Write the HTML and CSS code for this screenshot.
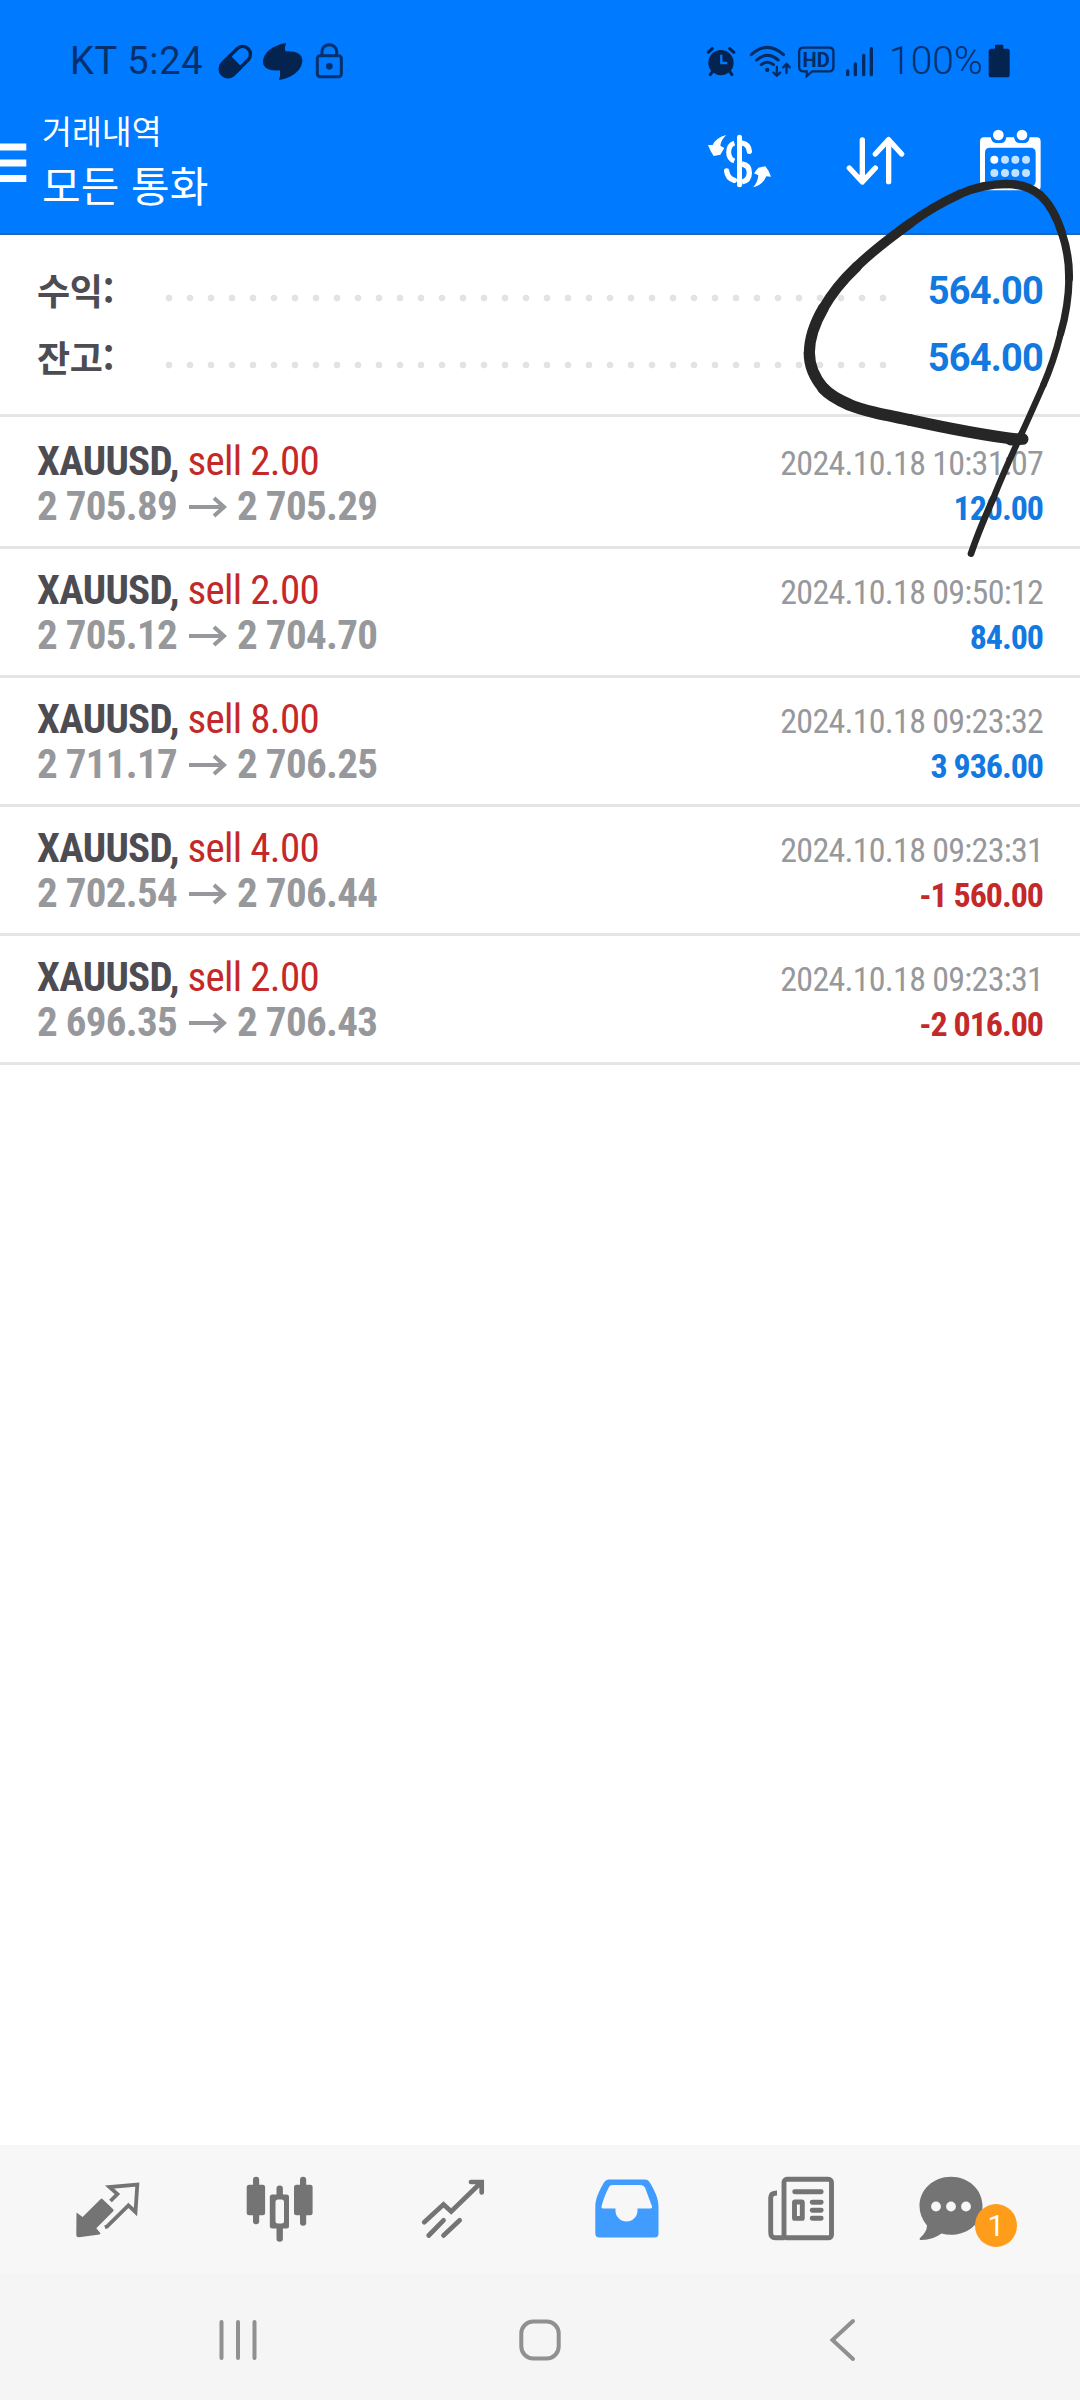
FILE: index.html
```html
<!DOCTYPE html>
<html lang="ko">
<head>
<meta charset="utf-8">
<title>거래내역</title>
<link rel="stylesheet" href="styles.css">
</head>
<body>
<div class="screen">
  <header class="top">
    <div class="status">
      <div class="status-left">
        <span class="clock">KT 5:24</span>
        <svg class="left-icons" viewBox="645 60 390 129">
          <g transform="rotate(-45 706 124)">
            <rect x="651" y="101" width="110" height="47" rx="23.500" fill="none" stroke="#04234f" stroke-width="10" transform="translate(5 0) scale(.992 1)"/>
            <path d="M708 96H676a28 28 0 0 0 0 57H708z" fill="#04234f"/>
          </g>
          <path d="M858 69C818 76 789 98 789 126C789 144 808 154 840 151Q842 168 837 180C878 174 907 150 907 121C907 100 885 92 856 94Q853 84 858 69Z" fill="#04234f"/>
          <rect x="952" y="107" width="72" height="63" rx="8" fill="none" stroke="#06306b" stroke-width="9"/>
          <path d="M966 107V94a22 20 0 0 1 44 0V107" fill="none" stroke="#06306b" stroke-width="9"/>
          <circle cx="988" cy="139" r="10" fill="#06306b"/>
        </svg>
      </div>
      <div class="status-right">
        <svg class="right-icons" viewBox="70 60 520 120">
          <g fill="#04234f" stroke="#04234f" stroke-linecap="round">
            <circle cx="121" cy="125" r="38" stroke="none"/>
            <path d="M83 94L95 83M147 83L160 94" stroke-width="9"/>
            <path d="M97 150L89 161M146 150L154 161" stroke-width="9"/>
            <path d="M122 104V126H137" fill="none" stroke="#007aff" stroke-width="7"/>
          </g>
          <g fill="none" stroke="#052c62" stroke-width="9" stroke-linecap="round">
            <path d="M212 101Q260 57 309 101M228 117Q260 89 293 117M242 131Q260 117 279 131"/>
            <path d="M289 138V162M279 155L289 164L299 155M318 156V131M308 139L318 129L328 139" stroke-width="7"/>
          </g>
          <circle cx="260" cy="147" r="6.500" fill="#052c62"/>
          <path d="M369 80H446Q459 80 459 93V138Q459 151 446 151H395L379 165V151H369Q356 151 356 138V93Q356 80 369 80Z" fill="none" stroke="#052c62" stroke-width="7"/>
          <text x="407" y="137" class="hd" text-anchor="middle" textLength="82" lengthAdjust="spacingAndGlyphs">HD</text>
          <path d="M502 150V161M525 129V161M550 103V161M573 83V161" fill="none" stroke="#052c62" stroke-width="10" stroke-linecap="round"/>
        </svg>
        <span class="battery-text">100%</span>
        <svg class="battery" viewBox="922 70 66 102"><path d="M943 74Q943 72 946 72H965Q968 72 968 74V84H980Q987 84 987 92V162Q987 170 980 170H931Q924 170 924 162V92Q924 84 931 84H943Z" fill="#04234f"/></svg>
      </div>
    </div>
    <div class="toolbar">
      <svg class="menu" viewBox="0 0 27 40"><path d="M0 4H26.300M0 20H26.300M0 35.500H26.300" stroke="#fff" stroke-width="7"/></svg>
      <div class="titles">
        <div class="title-small">거래내역</div>
        <div class="title-big">모든 통화</div>
      </div>
      <div class="actions">
        <svg class="action a-dollar" viewBox="78 325 204 198">
          <g fill="none" stroke="#fff">
            <path d="M178.500 353V495" stroke-width="15" stroke-linecap="round"/>
            <path d="M163 370Q146 376 146 398Q146 418 163 424" stroke-width="15"/>
            <path d="M186 370Q207 374 208 395" stroke-width="16" stroke-linecap="round"/>
            <path d="M186 433Q208 436 208 459Q208 482 186 487" stroke-width="16"/>
            <path d="M140 454Q142 476 163 482" stroke-width="16" stroke-linecap="round"/>
          </g>
          <path d="M139 346Q124 359 121 378L133 385L121 405L101 409Q91 395 84 376L98 376Q108 354 139 346Z" fill="#fff"/>
          <path d="M219 503Q233 489 235 467L222 461L235 444L256 440Q268 454 273 471L259 470Q249 495 219 503Z" fill="#fff"/>
        </svg>
        <svg class="action a-sort" viewBox="498 325 178 198"><path d="M547 361V486M508 445L547 487L586 445M626 486V361M586 403L626 360L665 403" fill="none" stroke="#fff" stroke-width="16" stroke-linecap="round" stroke-linejoin="round"/></svg>
        <svg class="action a-cal" viewBox="900 325 183 198">
          <path fill-rule="evenodd" fill="#fff" d="M912 353H932Q936 370 947 370H965Q976 370 979 353H1002Q1005 370 1017 370H1035Q1046 370 1049 353H1070Q1082 353 1082 366V500Q1082 512 1070 512H912Q900 512 900 500V366Q900 353 912 353ZM930 384Q915 384 915 399V484Q915 500 930 500H1051Q1067 500 1067 484V399Q1067 384 1051 384Z"/>
          <circle cx="955" cy="346" r="16" fill="#fff"/><circle cx="1026" cy="346" r="16" fill="#fff"/>
          <circle cx="943" cy="420" r="12" fill="#fff"/>
          <g fill="#c2e2ff"><circle cx="975" cy="420" r="12"/><circle cx="1006" cy="420" r="12"/><circle cx="1038" cy="420" r="12"/><circle cx="943" cy="460" r="12"/><circle cx="975" cy="460" r="12"/><circle cx="1006" cy="460" r="12"/><circle cx="1038" cy="460" r="12"/></g>
        </svg>
      </div>
    </div>
  </header>

  <section class="summary">
    <div class="sum-row"><span class="sum-label">수익:</span><span class="dots"></span><span class="sum-value">564.00</span></div>
    <div class="sum-row"><span class="sum-label">잔고:</span><span class="dots"></span><span class="sum-value">564.00</span></div>
  </section>

  <main class="deals">
    <article class="deal">
      <div class="deal-left"><div class="sym"><b>XAUUSD,</b> <span class="side">sell 2.00</span></div><div class="prices"><span>2 705.89</span><svg class="arr" viewBox="0 0 38 22"><path d="M0 11H35M25 2L35 11L25 20"/></svg><span>2 705.29</span></div></div>
      <div class="deal-right"><div class="time">2024.10.18 10:31:07</div><div class="amount pos">120.00</div></div>
    </article>
    <article class="deal">
      <div class="deal-left"><div class="sym"><b>XAUUSD,</b> <span class="side">sell 2.00</span></div><div class="prices"><span>2 705.12</span><svg class="arr" viewBox="0 0 38 22"><path d="M0 11H35M25 2L35 11L25 20"/></svg><span>2 704.70</span></div></div>
      <div class="deal-right"><div class="time">2024.10.18 09:50:12</div><div class="amount pos">84.00</div></div>
    </article>
    <article class="deal">
      <div class="deal-left"><div class="sym"><b>XAUUSD,</b> <span class="side">sell 8.00</span></div><div class="prices"><span>2 711.17</span><svg class="arr" viewBox="0 0 38 22"><path d="M0 11H35M25 2L35 11L25 20"/></svg><span>2 706.25</span></div></div>
      <div class="deal-right"><div class="time">2024.10.18 09:23:32</div><div class="amount pos">3 936.00</div></div>
    </article>
    <article class="deal">
      <div class="deal-left"><div class="sym"><b>XAUUSD,</b> <span class="side">sell 4.00</span></div><div class="prices"><span>2 702.54</span><svg class="arr" viewBox="0 0 38 22"><path d="M0 11H35M25 2L35 11L25 20"/></svg><span>2 706.44</span></div></div>
      <div class="deal-right"><div class="time">2024.10.18 09:23:31</div><div class="amount neg">-1 560.00</div></div>
    </article>
    <article class="deal">
      <div class="deal-left"><div class="sym"><b>XAUUSD,</b> <span class="side">sell 2.00</span></div><div class="prices"><span>2 696.35</span><svg class="arr" viewBox="0 0 38 22"><path d="M0 11H35M25 2L35 11L25 20"/></svg><span>2 706.43</span></div></div>
      <div class="deal-right"><div class="time">2024.10.18 09:23:31</div><div class="amount neg">-2 016.00</div></div>
    </article>
  </main>

  <nav class="tabs">
    <div class="tab"><svg viewBox="67 2169.500 80 80">
      <path d="M76.500 2212L82.600 2216.500L100.500 2198.700Q101.600 2197.500 102.700 2198.700L113.200 2208.800Q114 2209.700 113.200 2210.800L96.300 2227.700L100.500 2232.800L99.500 2234L79 2236.800Q76.300 2237 76.300 2234.500Z" fill="#747474"/>
      <path d="M110.500 2200.500L117.400 2193.500L109.500 2186.500L137.300 2184L135.500 2211.500L128.400 2204.800L107 2226L104.800 2226.600" fill="none" stroke="#747474" stroke-width="3.800"/>
    </svg></div>
    <div class="tab"><svg viewBox="240.500 2169.500 80 80">
      <g fill="#747474"><rect x="247.200" y="2184.300" width="18.400" height="30.500" rx="2.500"/><rect x="253.500" y="2176.300" width="6.200" height="47.400" rx="3"/><rect x="294.500" y="2184.300" width="18.600" height="30.500" rx="2.500"/><rect x="300.500" y="2176.300" width="6.200" height="49" rx="3"/><rect x="270.300" y="2194" width="19.200" height="34" rx="2.500"/><rect x="277" y="2185" width="6.400" height="56.300" rx="3"/></g>
      <rect x="276" y="2199" width="8.500" height="24" rx="2.500" fill="#f7f7f7"/>
    </svg></div>
    <div class="tab"><svg viewBox="414 2169.500 80 80"><path d="M424.200 2221.700L443.500 2204L451.200 2211L481 2182M471 2181.500H481.700V2192M428.700 2235L443.500 2219.800M443.500 2235L459.700 2219.800" fill="none" stroke="#747474" stroke-width="4.700" stroke-linecap="round"/></svg></div>
    <div class="tab"><svg viewBox="588.500 2169.500 80 80"><path fill="#409cff" fill-rule="evenodd" d="M609 2179H646Q648.700 2179 650 2181.500C655 2189.500 659 2198 659 2206V2233Q659 2237 655 2237H600Q595.800 2237 595.800 2233V2206C595.800 2198 600 2189.500 604.800 2181.500Q606.500 2179 609 2179ZM612.500 2184.500Q610.500 2184.500 609.500 2186.500C606.500 2192 603.500 2200 602 2206Q601.600 2208 603.500 2208H616V2210.500C616 2216 621 2221 627 2221S638 2216 638 2210.500V2208H651Q653 2208 652.500 2206L645.500 2187Q644 2184.500 641.500 2184.500Z"/></svg></div>
    <div class="tab"><svg viewBox="761.500 2169.500 80 80">
      <g fill="none" stroke="#747474" stroke-width="4.900"><rect x="784.500" y="2178.800" width="47.500" height="58.500" rx="3"/><path d="M777.500 2192.500C773 2192.500 771.200 2194 771.200 2197V2232Q771.200 2237.300 776 2237.300H785"/><path d="M795.200 2191.300H821.700M812.700 2201.700H821.700M812.700 2209.700H821.700M812.700 2217.700H821.700" stroke-linecap="round"/><rect x="795" y="2201.500" width="7.800" height="16.400" rx=".500"/></g>
    </svg></div>
    <div class="tab tab-chat"><svg class="wide" viewBox="915 2169.500 120 80">
      <path d="M951 2176.300C968.500 2176.300 982.500 2189 982.500 2205.500S968.500 2234.300 951 2234.300Q946 2234.300 941.500 2233Q932 2240 920.500 2239.500Q918.500 2238.800 920.500 2237Q927 2231 927 2225Q919.500 2216 919.500 2205.500C919.500 2189 933.500 2176.300 951 2176.300Z" fill="#747474"/>
      <circle cx="936" cy="2206" r="4.900" fill="#f7f7f7"/><circle cx="951" cy="2206" r="4.900" fill="#f7f7f7"/><circle cx="966" cy="2206" r="4.900" fill="#f7f7f7"/>
    </svg><span class="badge">1</span></div>
  </nav>
  <div class="sysnav">
    <svg viewBox="0 0 44 44"><path d="M5.500 4V40M22 4V40M38.500 4V40"/></svg>
    <svg viewBox="0 0 44 44"><rect x="3.300" y="3.500" width="37.400" height="37" rx="12"/></svg>
    <svg viewBox="0 0 44 44"><path d="M33 3L12.500 22L33 41"/></svg>
  </div>

  <svg class="ink" viewBox="0 0 960 1200">
    <path d="M752 809L788 807" stroke-width="35"/>
    <path d="M770 808C660 794 550 772 450 750" stroke-width="35"/>
    <path d="M450 750C370 734 310 722 265 703" stroke-width="35"/>
    <path d="M265 703C235 690 210 677 190 655" stroke-width="36"/>
    <path d="M190 655C165 625 148 590 148 550" stroke-width="34"/>
    <path d="M148 550C148 510 165 458 190 415" stroke-width="33"/>
    <path d="M190 415C215 370 250 328 290 290" stroke-width="31"/>
    <path d="M290 290C335 245 395 200 450 160" stroke-width="29"/>
    <path d="M450 160C500 123 555 93 600 72" stroke-width="27"/>
    <path d="M600 72C645 52 695 42 740 42" stroke-width="25"/>
    <path d="M740 42C780 42 812 52 840 75" stroke-width="26"/>
    <path d="M840 75C870 102 892 145 906 190" stroke-width="25"/>
    <path d="M906 190C921 235 928 280 927 325" stroke-width="24"/>
    <path d="M927 325C926 380 917 438 902 490" stroke-width="22"/>
    <path d="M902 490C888 545 872 595 850 645" stroke-width="20"/>
    <path d="M850 645C830 690 808 740 785 790" stroke-width="19"/>
    <path d="M785 790C755 855 725 920 700 985" stroke-width="19"/>
    <path d="M700 985C675 1040 652 1095 633 1151" stroke-width="20"/>
  </svg>
</div>
</body>
</html>
```
FILE: styles.css
```css
* { box-sizing: border-box; }
body { margin: 0; background: #fff; font-family: Roboto, "Noto Sans CJK KR", sans-serif; }
svg { display: block; flex: none; }
.screen { position: relative; width: 1080px; height: 2400px; display: flex; flex-direction: column; overflow: hidden; background: #fff; }

.top { height: 235px; background: #007aff; border-bottom: 2px solid #1a68b8; }
.status { height: 100px; padding: 21px 70px 0 70px; display: flex; justify-content: space-between; color: #06306b; }
.status-left, .status-right { display: flex; height: 80px; align-items: center; }
.clock { width: 145px; font-size: 38px; letter-spacing: .7px; white-space: nowrap; }
.left-icons { width: 130px; height: 43px; }
.right-icons { width: 173px; height: 40px; }
.hd { font: 700 61px "Roboto"; fill: #052c62; }
.battery-text { width: 98px; margin-left: 12px; font-size: 39px; font-weight: 350; white-space: nowrap; }
.battery { width: 22px; height: 34px; margin-left: 1px; }

.toolbar { display: flex; height: 133px; color: #fff; }
.menu { width: 27px; height: 40px; margin-top: 43px; }
.titles { flex: 1; padding: 8px 0 0 15px; font-family: "Noto Sans CJK KR", sans-serif; }
.title-small { font-size: 32.500px; line-height: 44px; }
.title-big { font-size: 42px; line-height: 64px; }
.actions { display: flex; padding-right: 39px; padding-top: 28px; }
.action { height: 66px; }
.a-dollar { width: 68px; margin-right: 72px; }
.a-sort { width: 59.300px; margin-right: 74.700px; }
.a-cal { width: 61px; }

.summary { height: 182px; padding: 22px 37px 0 37px; border-bottom: 3px solid #e5e5e5; }
.sum-row { display: flex; align-items: center; height: 67px; }
.sum-label { width: 128px; color: #4d4c52; font: 700 36px/64px "Noto Sans CJK KR", sans-serif; letter-spacing: -.300px; margin-bottom: 3px; white-space: nowrap; }
.dots { width: 722px; height: 8px; margin-top: 15px; background: radial-gradient(circle at 4px 4px, #e3e3e3 3px, transparent 3.700px) 0 0 / 21px 8px repeat-x; }
.sum-value { flex: 1; padding-top: 1px; text-align: right; color: #1279e0; font-size: 38px; font-weight: 700; letter-spacing: -.800px; white-space: nowrap; }

.deal { height: 129px; padding: 0 37px; display: flex; justify-content: space-between; border-bottom: 3px solid #e5e5e5; font-family: "Roboto Condensed", Roboto, sans-serif; font-stretch: 75%; white-space: nowrap; }
.deal:first-child { height: 132px; padding-top: 3px; }
.deal-left { padding-top: 19px; }
.sym { font-size: 41px; line-height: 45px; color: #4d4c52; letter-spacing: -.700px; }
.side { color: #c42828; }
.prices { display: flex; align-items: center; font-size: 41px; line-height: 45px; font-weight: 700; color: #97989b; letter-spacing: -.700px; }
.arr { width: 38px; height: 22px; margin: 0 10px 0 12px; fill: none; stroke: #97989b; stroke-width: 4; }
.deal-right { padding-top: 21px; text-align: right; }
.time { font-size: 34px; line-height: 45px; color: #97989b; letter-spacing: -.730px; }
.amount { font-size: 34px; line-height: 45px; font-weight: 700; letter-spacing: -1.050px; }
.pos { color: #1279e0; }
.neg { color: #c4292a; }

.tabs { display: grid; grid-template-columns: repeat(6, 173.600px); align-items: center; height: 129px; margin-top: auto; padding-left: 20px; background: #f7f7f7; }
.tab { position: relative; display: flex; justify-content: center; }
.tab svg { width: 80px; height: 80px; }
.tab svg.wide { width: 120px; }
.badge { position: absolute; left: 87px; top: 34px; width: 42px; height: 43px; border-radius: 50%; background: #ff9c1a; color: #fff; font-size: 30px; line-height: 43px; text-align: center; }
.sysnav { display: flex; align-items: center; justify-content: space-between; height: 126px; padding: 6px 216px 0; background: #f5f5f5; }
.sysnav svg { width: 44px; height: 44px; fill: none; stroke: #909090; stroke-width: 4; stroke-linecap: round; }

.ink { position: absolute; left: 760px; top: 170px; width: 320px; height: 400px; fill: none; stroke: #262626; stroke-linecap: round; }
```
